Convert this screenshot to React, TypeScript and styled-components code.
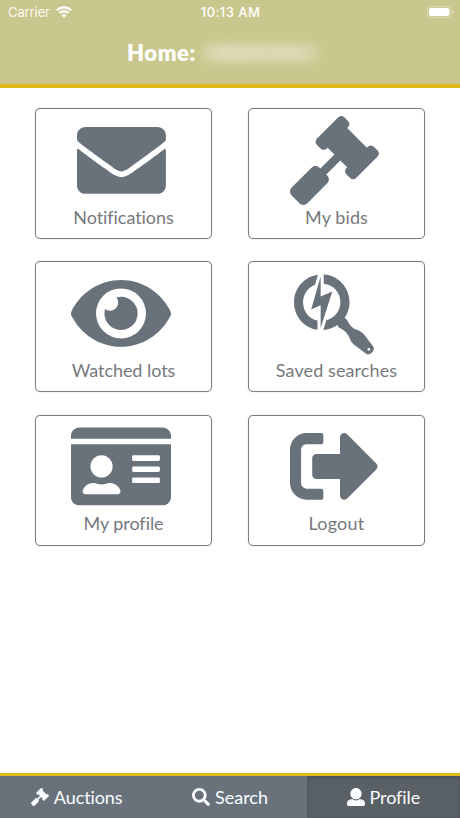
import React from 'react';
import styled, { createGlobalStyle } from 'styled-components';
import {
  FaEnvelope,
  FaGavel,
  FaEye,
  FaSearchengin,
  FaIdCard,
  FaSignOutAlt,
  FaSearch,
} from 'react-icons/fa';

const slate = '#69727b';
const gold = '#e0b91c';

const GlobalStyle = createGlobalStyle`
  * { box-sizing: border-box; }
  body {
    margin: 0;
    background: #fff;
    font-family: Lato, sans-serif;
    font-variant-ligatures: none;
  }
`;

const Screen = styled.div`
  height: 818px;
  display: flex;
  flex-direction: column;
  overflow: hidden;
`;

const Header = styled.header`
  height: 88px;
  flex: none;
  background: #c9c78d;
  border-bottom: 4px solid ${gold};
  color: #fff;
`;

const StatusBar = styled.div`
  height: 24px;
  padding: 0 6px 0 8px;
  display: grid;
  grid-template-columns: 1fr auto 1fr;
  align-items: center;
  font-family: Inter, sans-serif;
`;

const Carrier = styled.div`
  display: flex;
  align-items: center;
  gap: 6px;
  font-size: 13px;
  letter-spacing: -0.1px;
  color: #fafaf0;
`;

const Clock = styled.div`
  font-size: 13px;
  font-weight: 500;
  letter-spacing: 0.45px;
  margin-right: 1px;
`;

const BatterySlot = styled.div`
  display: flex;
  justify-content: flex-end;
`;

const TitleRow = styled.h1`
  margin: 0;
  height: 57px;
  padding-left: 127px;
  display: flex;
  align-items: center;
  gap: 6px;
  font-size: 22px;
  font-weight: 800;
`;

const TitleText = styled.span`
  width: 70px;
  white-space: nowrap;
  letter-spacing: 0.6px;
`;

const HiddenName = styled.span`
  width: 116px;
  height: 18px;
  background: linear-gradient(90deg, #d2d1a4, #dedcb9 18%, #dbd9b3 60%, #dddbb7 80%, #d0cf9c);
  filter: blur(4px);
`;

const Tiles = styled.main`
  flex: 1;
  padding: 20px 35px 0;
  display: grid;
  grid-template-columns: repeat(2, 177px);
  grid-auto-rows: 131px;
  justify-content: space-between;
  align-content: start;
  row-gap: 22.4px;
`;

const Tile = styled.button`
  padding: 6.5px 0 0;
  border: 1px solid #7c7f82;
  border-radius: 5px;
  box-shadow: 0 0 1px rgba(110, 114, 118, 0.6);
  background: #fff;
  display: flex;
  flex-direction: column;
  align-items: center;
  justify-content: flex-start;
  font-family: inherit;
`;

const TileIcon = styled.span<{ $width: number }>`
  height: 89px;
  display: flex;
  padding-right: 5px;
  color: ${slate};

  svg {
    width: ${(p) => p.$width}px;
    height: 88.9px;
    overflow: visible;
  }
`;

const TileLabel = styled.span<{ $spacing: number }>`
  font-size: 18px;
  line-height: 24px;
  letter-spacing: ${(p) => p.$spacing}px;
  color: #76797d;
`;

const TabBar = styled.nav`
  height: 45px;
  flex: none;
  border-top: 3px solid ${gold};
  background: ${slate};
  display: grid;
  grid-template-columns: repeat(3, 1fr);
`;

const Tab = styled.button<{ $active?: boolean }>`
  border: 0;
  padding: 0;
  background: ${(p) => (p.$active ? '#596066' : 'transparent')};
  box-shadow: ${(p) => (p.$active ? 'inset 0 2px 4px rgba(0,0,0,0.16)' : 'none')};
  color: #fafcff;
  display: flex;
  align-items: center;
  justify-content: center;
  gap: 5px;
  font-family: inherit;
  font-size: 18px;
  line-height: 24px;

  svg {
    width: 18px;
    height: 18px;
    margin-top: -1px;
    overflow: visible;
  }
`;

const TabLabel = styled.span<{ $spacing: number }>`
  letter-spacing: ${(p) => p.$spacing}px;
`;

const Wifi = () => (
  <svg width="16" height="12" viewBox="0 0 16 12" fill="none" stroke="#fff" strokeWidth="2.2">
    <path d="M.9 4.3a10.1 10.1 0 0 1 14.2 0" />
    <path d="M3.4 7a6.5 6.5 0 0 1 9.2 0" />
    <path d="M8 11.8 5.5 9.2a3.6 3.6 0 0 1 5 0z" fill="#fff" stroke="none" />
  </svg>
);

const Battery = () => (
  <svg width="27" height="12" viewBox="0 0 27 12">
    <rect x=".5" y=".5" width="23.5" height="11" rx="3.3" fill="none" stroke="#fff" strokeOpacity=".35" />
    <rect x="2" y="2" width="20.5" height="8" rx="2" fill="#fff" />
    <path d="M25.2 4v4c1.7-.6 1.7-3.4 0-4z" fill="#fff" fillOpacity=".55" />
  </svg>
);

const Person = () => (
  <svg viewBox="0 0 512 512" fill="currentColor">
    <path d="M256 0c88.366 0 160 71.634 160 160s-71.634 160-160 160S96 248.366 96 160 167.634 0 256 0zm183.283 333.821l-71.313-17.828c-74.923 53.89-165.738 41.864-223.94 0l-71.313 17.828C29.981 344.505 0 382.903 0 426.955V464c0 26.51 21.49 48 48 48h416c26.51 0 48-21.49 48-48v-37.045c0-44.052-29.981-82.45-72.717-93.134z" />
  </svg>
);

type Glyph = React.ComponentType;

const tiles: { label: string; Icon: Glyph; width: number; spacing: number }[] = [
  { label: 'Notifications', Icon: FaEnvelope, width: 88.9, spacing: -0.05 },
  { label: 'My bids', Icon: FaGavel, width: 88.9, spacing: 0.1 },
  { label: 'Watched lots', Icon: FaEye, width: 100, spacing: -0.05 },
  { label: 'Saved searches', Icon: FaSearchengin, width: 79.9, spacing: 0.1 },
  { label: 'My profile', Icon: FaIdCard, width: 100, spacing: -0.05 },
  { label: 'Logout', Icon: FaSignOutAlt, width: 88.9, spacing: 0.25 },
];

const tabs: { label: string; Icon: Glyph; active?: boolean; spacing: number }[] = [
  { label: 'Auctions', Icon: FaGavel, spacing: -0.1 },
  { label: 'Search', Icon: FaSearch, spacing: 0 },
  { label: 'Profile', Icon: Person, active: true, spacing: -0.1 },
];

export default function App() {
  return (
    <Screen>
      <GlobalStyle />
      <Header>
        <StatusBar>
          <Carrier>
            Carrier <Wifi />
          </Carrier>
          <Clock>10:13 AM</Clock>
          <BatterySlot>
            <Battery />
          </BatterySlot>
        </StatusBar>
        <TitleRow>
          <TitleText>Home:</TitleText>
          <HiddenName />
        </TitleRow>
      </Header>
      <Tiles>
        {tiles.map(({ label, Icon, width, spacing }) => (
          <Tile key={label}>
            <TileIcon $width={width}>
              <Icon />
            </TileIcon>
            <TileLabel $spacing={spacing}>{label}</TileLabel>
          </Tile>
        ))}
      </Tiles>
      <TabBar>
        {tabs.map(({ label, Icon, active, spacing }) => (
          <Tab key={label} $active={active}>
            <Icon />
            <TabLabel $spacing={spacing}>{label}</TabLabel>
          </Tab>
        ))}
      </TabBar>
    </Screen>
  );
}
